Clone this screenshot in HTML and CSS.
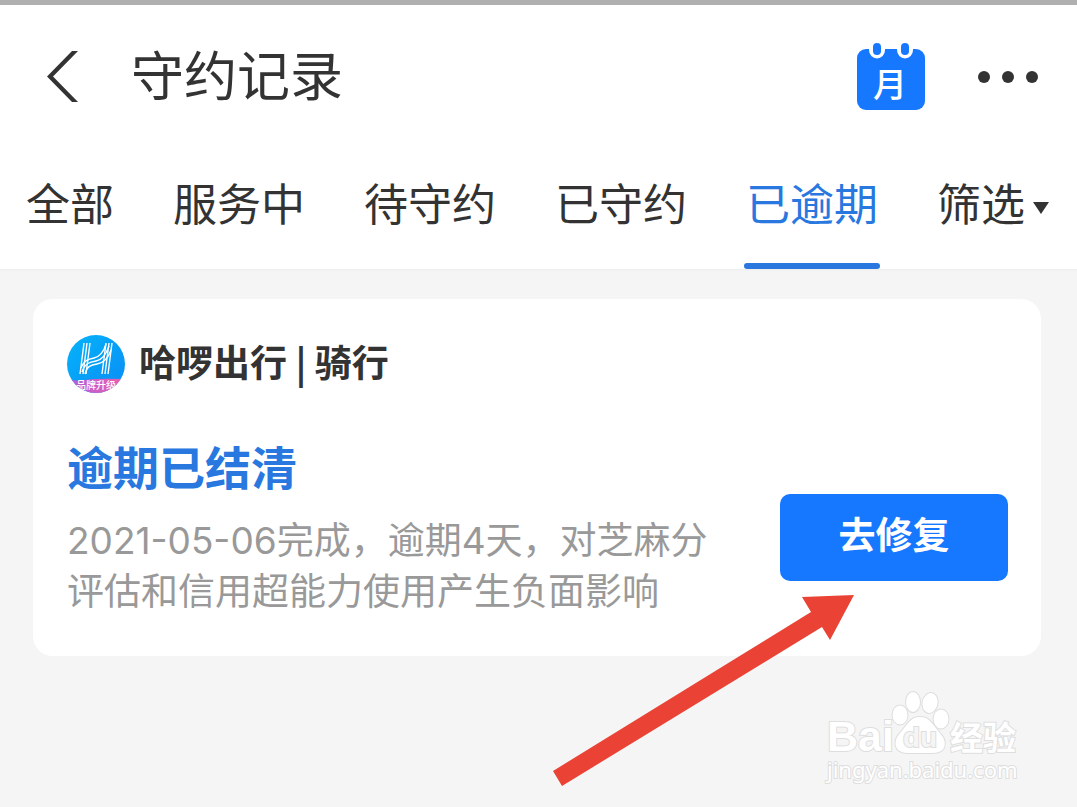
FILE: index.html
```html
<!DOCTYPE html>
<html lang="zh-CN">
<head>
    <meta charset="UTF-8">
    <meta name="viewport" content="width=device-width, initial-scale=1.0">
    <title>守约记录</title>
    <link rel="stylesheet" href="styles.css">
</head>
<body>
    <header class="top">
        <div class="title-bar">
            <button class="icon-button back" type="button" aria-label="返回">
                <svg width="32" height="52" viewBox="0 0 32 52">
                    <path d="M25 0H31L6 25.500L31 51H25L0 25.500Z" fill="#333"/>
                </svg>
            </button>
            <h1 class="title">守约记录</h1>
            <button class="icon-button" type="button" aria-label="月账单">
                <svg width="68" height="68" viewBox="0 0 68 68">
                    <rect y="6" width="68" height="61" rx="9" fill="#1677ff"/>
                    <path d="M12 5V7a8 8.500 0 0 0 16 0V5ZM40 5V7a8 8.500 0 0 0 16 0V5Z" fill="#fff"/>
                    <rect x="16" y="0" width="8" height="12" rx="4" fill="#1677ff"/>
                    <rect x="44" y="0" width="8" height="12" rx="4" fill="#1677ff"/>
                    <text class="month" x="33" y="54" text-anchor="middle">月</text>
                </svg>
            </button>
            <button class="icon-button more" type="button" aria-label="更多">
                <svg width="62" height="14" viewBox="0 0 62 14" fill="#333">
                    <circle cx="7" cy="7" r="6"/>
                    <circle cx="31" cy="7" r="6"/>
                    <circle cx="55" cy="7" r="6"/>
                </svg>
            </button>
        </div>
        <nav class="tabs">
            <button class="tab" type="button">全部</button>
            <button class="tab" type="button">服务中</button>
            <button class="tab" type="button">待守约</button>
            <button class="tab" type="button">已守约</button>
            <button class="tab active" type="button">已逾期</button>
            <button class="tab filter" type="button">筛选
                <svg class="caret" width="16" height="12" viewBox="0 0 16 12"><path d="M0 0H16L8 12Z" fill="#333"/></svg>
            </button>
        </nav>
    </header>

    <main class="content">
        <article class="card">
            <div class="merchant">
                <svg class="logo" width="58" height="58" viewBox="0 0 58 58">
                    <defs>
                        <clipPath id="round"><circle cx="29" cy="29" r="29"/></clipPath>
                        <linearGradient id="sky" x1="0" y1="0" x2="1" y2="1">
                            <stop offset="0" stop-color="#04b4fa"/>
                            <stop offset="1" stop-color="#0a8cf5"/>
                        </linearGradient>
                        <linearGradient id="ribbon">
                            <stop offset="0" stop-color="#b05ce0"/>
                            <stop offset="1" stop-color="#ee5fa8"/>
                        </linearGradient>
                    </defs>
                    <g clip-path="url(#round)">
                        <rect width="58" height="58" fill="url(#sky)"/>
                        <path d="M0 43Q8 47 18 45T58 44V58H0Z" fill="url(#ribbon)"/>
                        <g fill="none" stroke="#fff" stroke-width="1.400">
                            <path d="M17 8L13 39M20 8L16 39M23 8L19 39"/>
                            <path d="M39 8L35 39M42 8L38 39M45 8L41 39"/>
                            <path d="M14 33C17 25 22 24 27 23S37 17 39 9"/>
                            <path d="M15 37C18 28 23 27 29 26S39 20 42 11"/>
                            <path d="M18 39C20 31 24 30 30 29S41 24 44 15"/>
                        </g>
                        <text class="logo-text" x="29" y="54" text-anchor="middle">品牌升级</text>
                    </g>
                </svg>
                <h2 class="merchant-name">哈啰出行 | 骑行</h2>
            </div>
            <div class="record">
                <div class="detail">
                    <h3 class="status">逾期已结清</h3>
                    <p class="desc"><span class="num">2021-05-06</span>完成，逾期<span class="num">4</span>天，对芝麻分<br>评估和信用超能力使用产生负面影响</p>
                </div>
                <button class="repair" type="button">去修复</button>
            </div>
            <svg class="arrow" width="302" height="192" viewBox="0 0 302 192">
                <path d="M301 0L249 2L258 17L0 176L9 191L269 32L277 45Z" fill="#ea4335"/>
            </svg>
        </article>
    </main>

    <svg class="watermark" width="200" height="96" viewBox="0 0 200 96">
        <text class="mark-latin" x="3" y="60">Bai</text>
        <g class="mark-shape">
            <ellipse cx="76" cy="24" rx="7.500" ry="9.500"/>
            <ellipse cx="89" cy="11" rx="7" ry="10"/>
            <ellipse cx="106" cy="12" rx="7.500" ry="10" transform="rotate(12 106 12)"/>
            <ellipse cx="117" cy="28" rx="7.500" ry="9.500"/>
            <path d="M96 26C106 26 109 34 115 41C124 50 123 62 109 62H84C70 62 68 50 77 41C83 34 86 26 96 26Z"/>
        </g>
        <text class="mark-du" x="96" y="56" text-anchor="middle">du</text>
        <text class="mark-cn" x="126" y="59">经验</text>
        <text class="mark-url" x="3" y="87">jingyan.baidu.com</text>
    </svg>
</body>
</html>
```
FILE: styles.css
```css
* {
    box-sizing: border-box;
}

body {
    margin: 0;
    min-height: 100vh;
    position: relative;
    overflow-x: hidden;
    background-color: #f5f5f5;
    color: #333;
    font-family: "Noto Sans CJK SC", sans-serif;
}

button {
    padding: 0;
    border: none;
    background: none;
    color: inherit;
    font-family: inherit;
    cursor: pointer;
}

h1,
h2,
h3,
p {
    margin: 0;
}

svg {
    display: block;
}

/* header */
.top {
    background-color: #fff;
    border-top: 5px solid #b0b0b0;
    box-shadow: 0 1px 2px #ececec;
}

.title-bar {
    display: flex;
    align-items: center;
    height: 144px;
    padding: 0 38px 0 47px;
}

.title {
    flex: 1;
    margin-left: 52px;
    padding-bottom: 8px;
    font-size: 53px;
    font-weight: 400;
    line-height: 80px;
}

.more {
    margin-left: 52px;
}

.month {
    font-size: 34px;
    font-weight: 500;
    fill: #fff;
}

.tabs {
    display: flex;
    justify-content: space-between;
    padding: 0 28px 0 26px;
}

.tab {
    position: relative;
    height: 120px;
    padding-bottom: 14px;
    font-size: 44px;
    line-height: 64px;
}

.tab.active {
    color: #2878e0;
}

.tab.active::after {
    content: "";
    position: absolute;
    left: -2px;
    right: -2px;
    bottom: 0;
    height: 6px;
    border-radius: 3px;
    background-color: #2878e0;
}

.filter {
    display: flex;
    align-items: center;
    gap: 8px;
}

.caret {
    margin-top: 12px;
}

/* record card */
.content {
    padding: 30px 36px 30px 33px;
}

.card {
    position: relative;
    padding: 32px 33px 41px 34px;
    border-radius: 20px;
    background-color: #fff;
}

.merchant {
    display: flex;
    align-items: center;
    gap: 14px;
    height: 66px;
}

.merchant-name {
    padding-bottom: 6px;
    font-size: 37px;
    font-weight: 700;
    line-height: 56px;
}

.logo-text {
    font-size: 10px;
    font-weight: 500;
    fill: #fff;
}

.record {
    display: flex;
    align-items: center;
    justify-content: space-between;
    margin-top: 32px;
}

.status {
    font-size: 46px;
    font-weight: 700;
    line-height: 72px;
    color: #2878e0;
}

.desc {
    margin-top: 12px;
    font-size: 37px;
    line-height: 51px;
    color: #999;
    white-space: nowrap;
}

.num {
    font-family: Inter, sans-serif;
    line-height: 1;
}

.repair {
    flex: none;
    width: 228px;
    height: 87px;
    margin-top: 30px;
    padding-bottom: 8px;
    border-radius: 10px;
    background-color: #1677ff;
    color: #fff;
    font-size: 37px;
    font-weight: 700;
}

.arrow {
    position: absolute;
    right: 186px;
    top: 296px;
    pointer-events: none;
}

/* watermark */
.watermark {
    position: absolute;
    right: 53px;
    bottom: 20px;
    overflow: visible;
    fill: #fff;
    stroke: #dedede;
    stroke-width: 2px;
    paint-order: stroke;
}

.mark-latin {
    font-family: "Liberation Sans", sans-serif;
    font-size: 43px;
    font-weight: 700;
}

.mark-du {
    font-family: "Liberation Sans", sans-serif;
    font-size: 28px;
    font-weight: 700;
    fill: #f5f5f5;
}

.mark-cn {
    font-size: 33px;
    font-weight: 700;
}

.mark-url {
    font-family: "Noto Sans", sans-serif;
    font-size: 22px;
}
```
